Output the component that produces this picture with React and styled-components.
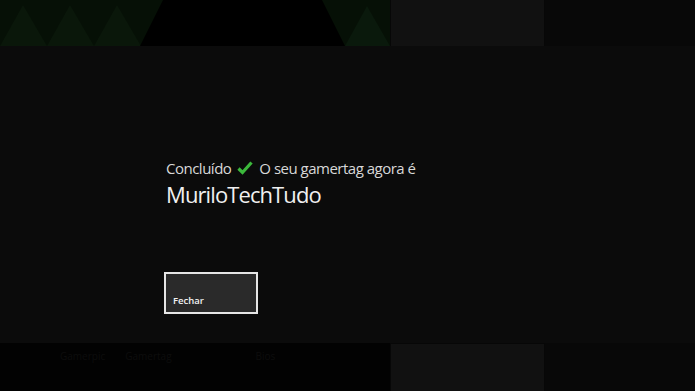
import React from "react";
import styled, { createGlobalStyle } from "styled-components";

const GlobalStyle = createGlobalStyle`
  html, body {
    margin: 0;
    padding: 0;
    background: #070707;
    font-family: "Open Sans", "Noto Sans", sans-serif;
  }
`;

const Screen = styled.div`
  position: relative;
  width: 695px;
  height: 391px;
  overflow: hidden;
  background: #070707;
`;

// the dashboard behind the dialog
const Dashboard = styled.div`
  display: grid;
  grid-template-columns: 390px 153px 1fr;
  column-gap: 1px;
  height: 100%;
`;

const HeroColumn = styled.div`
  display: flex;
  flex-direction: column;
  background: #020202;
`;

const Hero = styled.div`
  height: 200px;
  background: #061006;
`;

const PivotRow = styled.div`
  display: flex;
  margin-top: auto;
  height: 48px;
  padding-left: 60px;
  gap: 20px;
`;

const PivotItem = styled.span`
  font-size: 10px;
  color: #0d0d0d;
  padding-top: 6px;
  margin-left: ${(p) => p.$push || 0}px;
`;

const TileColumn = styled.div`
  display: flex;
  flex-direction: column;
  justify-content: space-between;
`;

const Tile = styled.div`
  height: ${(p) => p.$h}px;
  background: #111111;
`;

const RightColumn = styled.div`
  background: #080808;
`;

const Dialog = styled.div`
  position: absolute;
  left: 0;
  right: 0;
  top: 46px;
  height: 297px;
  background: #0b0b0b;
  display: flex;
  flex-direction: column;
  padding: 112px 0 0 166px;
  box-sizing: border-box;
`;

const StatusLine = styled.div`
  display: flex;
  align-items: center;
  gap: 6px;
  font-size: 15px;
  letter-spacing: -0.5px;
  color: #d8d8d8;
  line-height: 20px;
`;

const Gamertag = styled.div`
  font-size: 22px;
  letter-spacing: -0.9px;
  color: #f0f0f0;
  line-height: 30px;
  margin-top: 1px;
`;

const CloseButton = styled.button`
  margin: 63px 0 0 -2px;
  width: 94px;
  height: 42px;
  border: 2px solid #e6e6e6;
  background: #2a2a2a;
  color: #f2f2f2;
  font-family: inherit;
  font-size: 9.5px;
  font-weight: 600;
  text-align: left;
  display: flex;
  align-items: flex-end;
  padding: 0 0 5px 7px;
  box-sizing: border-box;
`;

function HeroArt() {
  const tris = [0, 47, 94];
  return (
    <svg width="390" height="200" viewBox="0 0 390 200">
      <rect width="390" height="200" fill="#061006" />
      {tris.map((x) => (
        <polygon key={x} points={`${x},46 ${x + 23},5 ${x + 47},46`} fill="#0a170a" />
      ))}
      <polygon points="163,0 322,0 345,46 140,46" fill="#000" />
      <polygon points="345,46 367,6 390,46" fill="#0a190c" />
    </svg>
  );
}

function Check() {
  return (
    <svg width="16" height="14" viewBox="0 0 16 14">
      <path d="M1.5 7.5 L5.5 11.5 L14.5 1.5" fill="none" stroke="#3cb83c" strokeWidth="3.2" />
    </svg>
  );
}

export default function App() {
  return (
    <Screen>
      <GlobalStyle />
      <Dashboard>
        <HeroColumn>
          <Hero>
            <HeroArt />
          </Hero>
          <PivotRow>
            <PivotItem>Gamerpic</PivotItem>
            <PivotItem>Gamertag</PivotItem>
            <PivotItem $push={64}>Bios</PivotItem>
          </PivotRow>
        </HeroColumn>
        <TileColumn>
          <Tile $h={46} />
          <Tile $h={47} />
        </TileColumn>
        <RightColumn />
      </Dashboard>
      <Dialog>
        <StatusLine>
          Concluído <Check /> O seu gamertag agora é
        </StatusLine>
        <Gamertag>MuriloTechTudo</Gamertag>
        <CloseButton>Fechar</CloseButton>
      </Dialog>
    </Screen>
  );
}
